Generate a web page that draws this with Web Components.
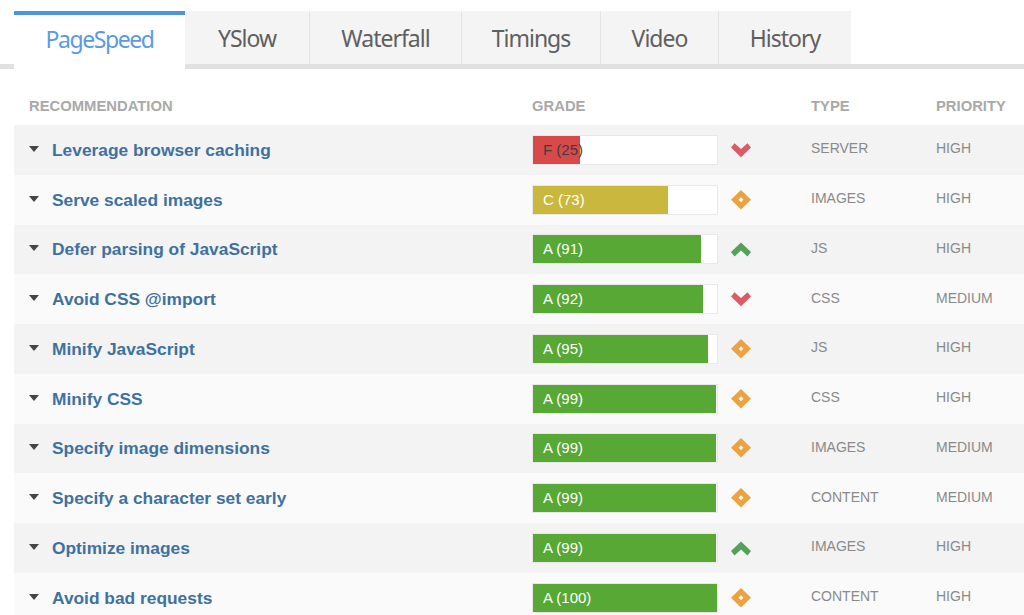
<!DOCTYPE html>
<html lang="en">
<head>
<meta charset="utf-8">
<title>PageSpeed</title>
<style>
  html, body { margin: 0; padding: 0; background: #fff; overflow: hidden; height: 615px; }
</style>
</head>
<body>
<report-tabs>
  <report-tab active style="width:171px;letter-spacing:-1.4px">PageSpeed</report-tab>
  <report-tab style="width:125px">YSlow</report-tab>
  <report-tab style="width:152px">Waterfall</report-tab>
  <report-tab style="width:139px">Timings</report-tab>
  <report-tab style="width:118px">Video</report-tab>
  <report-tab last style="width:132px">History</report-tab>
</report-tabs>
<report-table id="table"></report-table>

<script>
const rows = [
  ['Leverage browser caching', 'F', 25, 'down', 'SERVER', 'HIGH'],
  ['Serve scaled images', 'C', 73, 'same', 'IMAGES', 'HIGH'],
  ['Defer parsing of JavaScript', 'A', 91, 'up', 'JS', 'HIGH'],
  ['Avoid CSS @import', 'A', 92, 'down', 'CSS', 'MEDIUM'],
  ['Minify JavaScript', 'A', 95, 'same', 'JS', 'HIGH'],
  ['Minify CSS', 'A', 99, 'same', 'CSS', 'HIGH'],
  ['Specify image dimensions', 'A', 99, 'same', 'IMAGES', 'MEDIUM'],
  ['Specify a character set early', 'A', 99, 'same', 'CONTENT', 'MEDIUM'],
  ['Optimize images', 'A', 99, 'up', 'IMAGES', 'HIGH'],
  ['Avoid bad requests', 'A', 100, 'same', 'CONTENT', 'HIGH'],
];

const shell = (html) => {
  const t = document.createElement('template');
  t.innerHTML = html;
  return t;
};

const tabsTemplate = shell(`
<style>
  :host {
    display: flex;
    margin-top: 11px;
    padding-left: 14px;
    height: 58px;
    box-sizing: border-box;
    border-bottom: 5px solid #e1e1e1;
  }
</style>
<slot></slot>
`);

class ReportTabs extends HTMLElement {
  constructor() {
    super();
    this.attachShadow({ mode: 'open' }).appendChild(tabsTemplate.content.cloneNode(true));
  }
}

const tabTemplate = shell(`
<style>
  :host {
    display: flex;
    align-items: center;
    justify-content: center;
    box-sizing: border-box;
    height: 53px;
    background: #f4f4f4;
    border-right: 1px solid #e4e4e4;
    color: #5f5f5f;
    font: 23px/1 "Noto Sans", sans-serif;
    letter-spacing: -1px;
    padding-top: 2px;
  }
  :host([last]) { border-right: 0; }
  :host([active]) {
    height: 58px;
    background: #fff;
    border-right: 0;
    border-top: 4px solid #5095dc;
    color: #5a9be0;
    padding-top: 0;
    padding-bottom: 5px;
    position: relative;
    z-index: 1;
  }
</style>
<slot></slot>
`);

class ReportTab extends HTMLElement {
  constructor() {
    super();
    this.attachShadow({ mode: 'open' }).appendChild(tabTemplate.content.cloneNode(true));
  }
}

const tableTemplate = shell(`
<style>
  :host {
    display: block;
    margin-left: 14px;
    font-family: "Liberation Sans", Arial, sans-serif;
  }
  .head {
    display: grid;
    grid-template-columns: 518px 279px 125px 1fr;
    align-items: center;
    color: #a9a9a9;
    font-size: 14.8px;
    font-weight: 700;
    padding-top: 17px;
    box-sizing: border-box;
    height: 56px;
  }
  .head span:first-child { padding-left: 15px; }
</style>
<div class="head">
  <span>RECOMMENDATION</span><span>GRADE</span><span>TYPE</span><span>PRIORITY</span>
</div>
<div id="body"></div>
`);

class ReportTable extends HTMLElement {
  constructor() {
    super();
    this.attachShadow({ mode: 'open' }).appendChild(tableTemplate.content.cloneNode(true));
  }

  connectedCallback() {
    const body = this.shadowRoot.querySelector('#body');
    rows.forEach(([name, grade, score, trend, type, priority]) => {
      const row = document.createElement('report-row');
      row.setAttribute('name', name);
      row.setAttribute('grade', grade);
      row.setAttribute('score', score);
      row.setAttribute('trend', trend);
      row.setAttribute('type', type);
      row.setAttribute('priority', priority);
      body.appendChild(row);
    });
  }
}

const rowTemplate = shell(`
<style>
  :host {
    display: grid;
    grid-template-columns: 518px 199px 80px 125px 1fr;
    align-items: center;
    height: 49.75px;
    background: #fafafa;
    font-family: "Liberation Sans", Arial, sans-serif;
  }
  :host(:nth-child(odd)) { background: #f3f3f3; }
  .name {
    display: flex;
    align-items: center;
    padding-left: 15px;
    color: #3f719f;
    font-size: 17.35px;
    font-weight: 700;
  }
  #name { padding-top: 1px; }
  .caret {
    width: 0;
    height: 0;
    margin: -2px 13px 0 0;
    border-left: 5px solid transparent;
    border-right: 5px solid transparent;
    border-top: 6px solid #444;
  }
  .cell {
    color: #8a8a8a;
    font-size: 14px;
    margin-top: -3px;
  }
</style>
<div class="name"><span class="caret"></span><span id="name"></span></div>
<grade-bar id="bar"></grade-bar>
<trend-icon id="trend"></trend-icon>
<div class="cell" id="type"></div>
<div class="cell" id="priority"></div>
`);

class ReportRow extends HTMLElement {
  constructor() {
    super();
    this.attachShadow({ mode: 'open' }).appendChild(rowTemplate.content.cloneNode(true));
  }

  connectedCallback() {
    const $ = (id) => this.shadowRoot.querySelector(id);
    $('#name').textContent = this.getAttribute('name');
    $('#bar').setAttribute('grade', this.getAttribute('grade'));
    $('#bar').setAttribute('score', this.getAttribute('score'));
    $('#trend').setAttribute('kind', this.getAttribute('trend'));
    $('#type').textContent = this.getAttribute('type');
    $('#priority').textContent = this.getAttribute('priority');
  }
}

const barColors = { A: '#57a835', C: '#c9b83d', F: '#d84a4a' };

class GradeBar extends HTMLElement {
  constructor() {
    super();
    this.attachShadow({ mode: 'open' });
  }

  connectedCallback() {
    this.render();
  }

  static get observedAttributes() { return ['grade', 'score']; }

  attributeChangedCallback() {
    this.render();
  }

  render() {
    const grade = this.getAttribute('grade') || 'A';
    const score = Number(this.getAttribute('score') || 0);
    // the low grades get dark text, it runs past the fill
    const color = grade === 'F' ? '#3d3d3d' : '#fff';
    this.shadowRoot.innerHTML = `
      <style>
        :host {
          display: block;
          position: relative;
          box-sizing: border-box;
          width: 186px;
          height: 30px;
          background: #fff;
          border: 1px solid #e8e8e8;
          font: 15px/27px "Liberation Sans", Arial, sans-serif;
        }
        .fill {
          height: 100%;
          width: calc(${score}% + 0.5px);
          max-width: 100%;
          background: ${barColors[grade]};
        }
        .label {
          position: absolute;
          left: 10px;
          top: 0;
          color: ${color};
          white-space: nowrap;
        }
      </style>
      <div class="fill"></div>
      <span class="label">${grade} (${score})</span>
    `;
  }
}

const trendIcons = {
  down: '<path d="M3.500 3.200 10 9 16.500 3.200 20 7.500 10 17.300 0 7.500Z" fill="#dd5b66"/>',
  up: '<path d="M10 3.400 20 13 16.500 17.400 10 11.600 3.500 17.400 0 13Z" fill="#55a05a"/>',
  same: '<path fill-rule="evenodd" d="M10 0 20 9.700 10 19.400 0 9.700ZM10 7.200 7.500 9.700 10 12.200 12.500 9.700Z" fill="#eca23e"/>',
};

class TrendIcon extends HTMLElement {
  constructor() {
    super();
    this.attachShadow({ mode: 'open' });
  }

  static get observedAttributes() { return ['kind']; }

  attributeChangedCallback() {
    this.shadowRoot.innerHTML = `
      <style>
        :host { display: flex; }
        svg { display: block; }
      </style>
      <svg width="20" height="20" viewBox="0 0 20 20">${trendIcons[this.getAttribute('kind')]}</svg>
    `;
  }
}

customElements.define('report-tabs', ReportTabs);
customElements.define('report-tab', ReportTab);
customElements.define('grade-bar', GradeBar);
customElements.define('trend-icon', TrendIcon);
customElements.define('report-row', ReportRow);
customElements.define('report-table', ReportTable);
</script>
</body>
</html>
